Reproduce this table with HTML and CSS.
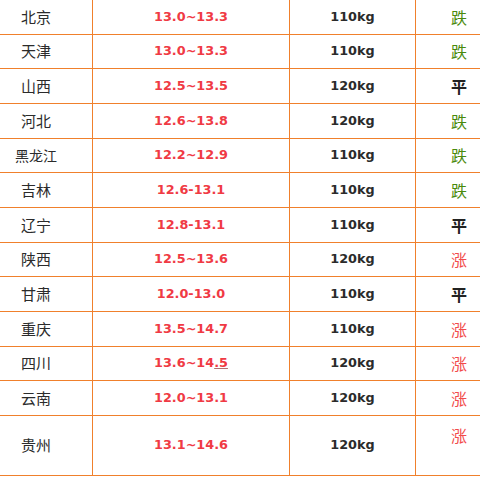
FILE: index.html
```html
<!DOCTYPE html>
<html lang="zh-CN">
<head>
<meta charset="utf-8">
<title>猪价</title>
<link rel="stylesheet" href="styles.css">
</head>
<body>
<table class="price-table">
  <colgroup>
    <col class="c-name">
    <col class="c-price">
    <col class="c-weight">
    <col class="c-trend">
  </colgroup>
  <tbody>
    <tr><td class="name">北京</td><td class="price">13.0~13.3</td><td class="weight">110kg</td><td class="trend down">跌</td></tr>
    <tr><td class="name">天津</td><td class="price">13.0~13.3</td><td class="weight">110kg</td><td class="trend down">跌</td></tr>
    <tr><td class="name">山西</td><td class="price">12.5~13.5</td><td class="weight">120kg</td><td class="trend flat">平</td></tr>
    <tr><td class="name">河北</td><td class="price">12.6~13.8</td><td class="weight">120kg</td><td class="trend down">跌</td></tr>
    <tr><td class="name small">黑龙江</td><td class="price">12.2~12.9</td><td class="weight">110kg</td><td class="trend down">跌</td></tr>
    <tr><td class="name">吉林</td><td class="price">12.6-13.1</td><td class="weight">110kg</td><td class="trend down">跌</td></tr>
    <tr><td class="name">辽宁</td><td class="price">12.8-13.1</td><td class="weight">110kg</td><td class="trend flat">平</td></tr>
    <tr><td class="name">陕西</td><td class="price">12.5~13.6</td><td class="weight">120kg</td><td class="trend up">涨</td></tr>
    <tr><td class="name">甘肃</td><td class="price">12.0-13.0</td><td class="weight">110kg</td><td class="trend flat">平</td></tr>
    <tr><td class="name">重庆</td><td class="price">13.5~14.7</td><td class="weight">110kg</td><td class="trend up">涨</td></tr>
    <tr><td class="name">四川</td><td class="price">13.6~14<span class="ul">.5</span></td><td class="weight">120kg</td><td class="trend up">涨</td></tr>
    <tr><td class="name">云南</td><td class="price">12.0~13.1</td><td class="weight">120kg</td><td class="trend up">涨</td></tr>
    <tr class="tall"><td class="name">贵州</td><td class="price">13.1~14.6</td><td class="weight">120kg</td><td class="trend up top">涨</td></tr>
  </tbody>
</table>
</body>
</html>
```

FILE: styles.css
```css
html, body {
  margin: 0;
  padding: 0;
  background: #ffffff;
  overflow: hidden;
}

.price-table {
  border-collapse: separate;
  border-spacing: 0;
  table-layout: fixed;
  width: 523px;
  margin-left: -20px;
}

.c-name { width: 113px; }
.c-price { width: 197px; }
.c-weight { width: 126px; }
.c-trend { width: 87px; }

.price-table tr {
  height: 34.67px;
}

.price-table tr.tall {
  height: 60px;
}

.price-table td {
  border-right: 1px solid #f0802c;
  border-bottom: 1px solid #f0802c;
  padding: 0;
  text-align: center;
  vertical-align: middle;
  line-height: 20px;
}

.name {
  font-family: "Noto Sans CJK SC", sans-serif;
  font-size: 15px;
  color: #2b2b2b;
}

.name.small {
  font-size: 14px;
}

.price {
  font-family: "DejaVu Sans", sans-serif;
  font-weight: bold;
  font-size: 12.8px;
  color: #f03a44;
}

.ul {
  text-decoration: underline;
  text-decoration-color: #b07070;
}

.weight {
  font-family: "DejaVu Sans", sans-serif;
  font-weight: bold;
  font-size: 12.8px;
  color: #2b2b2b;
}

.trend {
  font-family: "Noto Sans CJK SC", sans-serif;
  font-size: 16px;
}

.trend.down { color: #4a8a0c; }
.trend.flat { color: #222222; font-weight: bold; }
.trend.up { color: #f24a4a; }

.price-table td.top {
  vertical-align: top;
  padding-top: 9px;
}
```
